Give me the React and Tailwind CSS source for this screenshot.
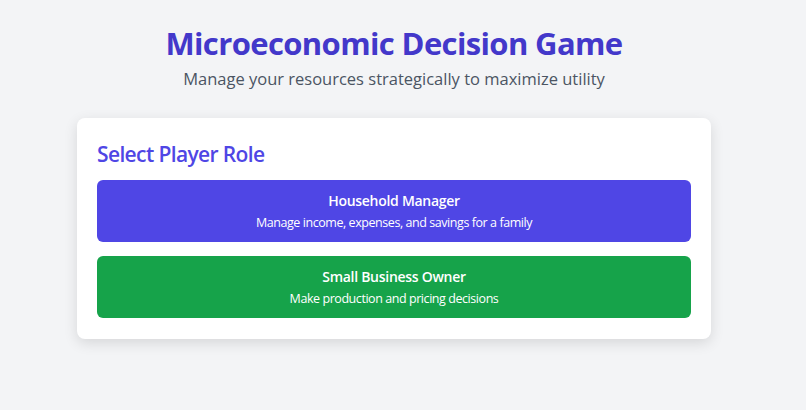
import React from 'react';

const roles = [
  { title: "Household Manager", desc: "Manage income, expenses, and savings for a family", color: "bg-[#4f46e5]" },
  { title: "Small Business Owner", desc: "Make production and pricing decisions", color: "bg-[#16a34a]" },
];

const App = () => {
  return (
    <div className="min-h-screen w-full bg-[#f3f4f6] font-['Open_Sans',sans-serif]">
      <div className="w-[788px] pt-[25px]">
        <header className="text-center mb-[27px]">
          <h1 className="text-[31px] leading-9 tracking-[-0.02em] font-bold text-[#4338ca]">Microeconomic Decision Game</h1>
          <p className="mt-[6px] text-[16.5px] leading-6 text-[#4b5563]">Manage your resources strategically to maximize utility</p>
        </header>
        <div className="mx-auto w-[634px] bg-white rounded-lg shadow-[0_4px_14px_rgba(0,0,0,0.12)] px-5 pt-[22px] pb-[21px]">
          <h2 className="text-[21px] leading-7 tracking-[-0.03em] font-semibold text-[#4f46e5] mb-[12px]">Select Player Role</h2>
          <div className="flex flex-col gap-[14px]">
            {roles.map(role => (
              <button key={role.title} className={`${role.color} w-full rounded-md text-white pt-[11px] pb-[10px] text-center`}>
                <div className="text-sm leading-5 tracking-[-0.02em] font-semibold mb-[3px]">{role.title}</div>
                <div className="text-[12.5px] leading-[18px] tracking-[-0.035em]">{role.desc}</div>
              </button>
            ))}
          </div>
        </div>
      </div>
    </div>
  );
};

export default App;
